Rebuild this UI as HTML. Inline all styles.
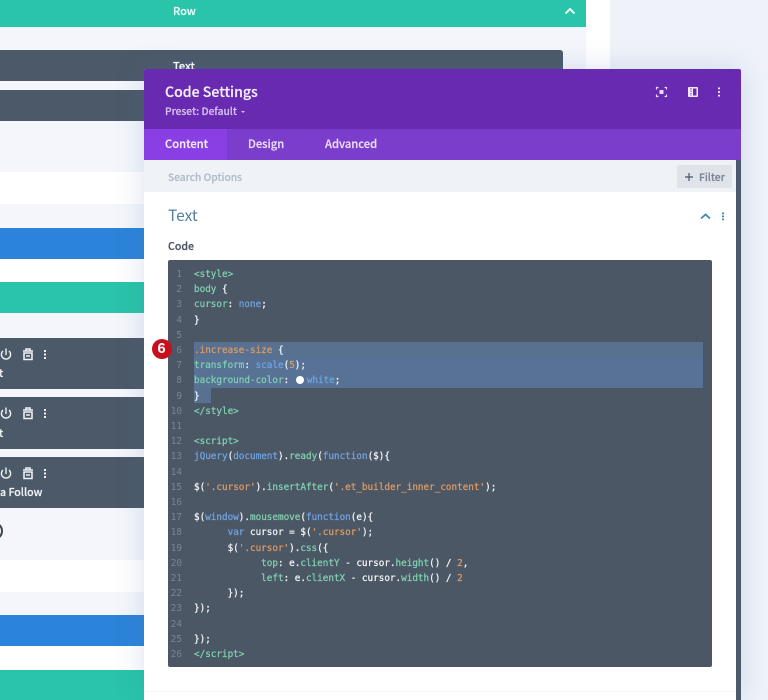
<!DOCTYPE html>
<html><head><meta charset="utf-8">
<style>
html,body{margin:0;padding:0}
body{width:768px;height:700px;overflow:hidden;background:#eff3f9;position:relative}
#w{position:absolute;left:0;top:0;width:768px;height:700px;overflow:hidden;filter:blur(.35px);font-family:"Noto Sans CJK SC","Liberation Sans",sans-serif}
.b{position:absolute}
.t{position:absolute;white-space:pre;line-height:1}
.sb{font-weight:500;-webkit-text-stroke:.2px currentColor}
#code div{position:absolute;left:194px;margin-top:1px;white-space:pre;font:9.3px/15px "DejaVu Sans Mono",monospace;color:#f2f4f6;-webkit-text-stroke:.25px currentColor}
#code i{position:absolute;left:-34px;width:22px;text-align:right;font-style:normal;color:#7a8592;-webkit-text-stroke:0}
.g{color:#7fd0ae}.u{color:#6fa3e0}.o{color:#dd9a62}
</style></head><body><div id="w">
<div class="b" style="left:0;top:0;width:610px;height:700px;background:#fff"></div>
<div class="b" style="left:0;top:0;width:586px;height:700px;background:#f4f6fb"></div>
<div class="b" style="left:0;top:0;width:586px;height:27px;background:#29c4a9"></div>
<div class="t sb" style="left:173px;top:6px;font-size:11px;color:#eafaf6">Row</div>
<svg class="b" style="left:564px;top:6px" width="12" height="10"><path d="M1.500 7.500L6 3L10.500 7.500" fill="none" stroke="#eafaf6" stroke-width="2"/></svg>
<div class="b" style="left:0;top:50px;width:563px;height:31px;background:#4c5968;border-radius:0 3px 0 0"></div>
<div class="t sb" style="left:173px;top:61px;font-size:11px;color:#fff">Text</div>
<div class="b" style="left:0;top:90px;width:563px;height:31px;background:#4c5968"></div>
<div class="b" style="left:0;top:172px;width:586px;height:32px;background:#fff"></div>
<div class="b" style="left:0;top:228px;width:586px;height:31px;background:#2b84d9"></div>
<div class="b" style="left:0;top:259px;width:586px;height:23px;background:#fff"></div>
<div class="b" style="left:0;top:282px;width:586px;height:31px;background:#29c4a9"></div>
<div class="b" style="left:0;top:338px;width:563px;height:51px;background:#4c5968"></div>
<div class="b" style="left:0;top:397px;width:563px;height:52px;background:#4c5968"></div>
<div class="b" style="left:0;top:457px;width:563px;height:51px;background:#4c5968"></div>
<div class="b" style="left:0;top:560px;width:586px;height:32px;background:#fff"></div>
<div class="b" style="left:0;top:615px;width:586px;height:31px;background:#2b84d9"></div>
<div class="b" style="left:0;top:646px;width:586px;height:24px;background:#fff"></div>
<div class="b" style="left:0;top:670px;width:586px;height:30px;background:#29c4a9"></div>

<svg class="b" style="left:0;top:344px" width="60" height="170" fill="none" stroke="#eef1f4" stroke-width="1.400">
<g><path d="M3 7a4.600 4.600 0 1 0 6 0M6 4.500V11"/><path d="M24 9h8v6.500h-8zM23 7h10M26 6.500V5h4v1.500M26 12h4" stroke-width="1.600"/><path d="M45 6v2M45 9.500v2M45 13v2" stroke-width="2"/></g>
<g transform="translate(0,59)"><path d="M3 7a4.600 4.600 0 1 0 6 0M6 4.500V11"/><path d="M24 9h8v6.500h-8zM23 7h10M26 6.500V5h4v1.500M26 12h4" stroke-width="1.600"/><path d="M45 6v2M45 9.500v2M45 13v2" stroke-width="2"/></g>
<g transform="translate(0,119)"><path d="M3 7a4.600 4.600 0 1 0 6 0M6 4.500V11"/><path d="M24 9h8v6.500h-8zM23 7h10M26 6.500V5h4v1.500M26 12h4" stroke-width="1.600"/><path d="M45 6v2M45 9.500v2M45 13v2" stroke-width="2"/></g>
</svg>
<div class="t sb" style="left:-1px;top:369px;font-size:10.600px;color:#eef1f4">t</div>
<div class="t sb" style="left:-1px;top:429px;font-size:10.600px;color:#eef1f4">t</div>
<div class="t sb" style="left:0;top:488px;font-size:10.600px;color:#eef1f4">a Follow</div>
<div class="b" style="left:-10px;top:523px;width:9px;height:12px;border:2px solid #3d4652;border-radius:50%;background:#fff"></div>

<!-- modal -->
<div class="b" style="left:144px;top:69px;width:597px;height:631px;background:#fff;box-shadow:0 0 30px rgba(70,110,170,.2);border-radius:2px 2px 0 0"></div>
<div class="b" style="left:144px;top:69px;width:597px;height:60px;background:#672ab0;border-radius:2px 2px 0 0"></div>
<div class="t sb" style="left:165px;top:85px;font-size:14.100px;color:#f3ecfb">Code Settings</div>
<div class="t sb" style="left:165px;top:106px;font-size:10.200px;color:#d5bff0">Preset: Default</div>
<div class="b" style="left:241px;top:111px;border:2px solid transparent;border-top:2.500px solid #d5bff0;border-bottom:0"></div>
<svg class="b" style="left:650px;top:84px" width="80" height="16">
<path d="M8.500 3.500H6.500v2M14.500 3.500h2v2M8.500 12.500H6.500v-2M14.500 12.500h2v-2" fill="none" stroke="#e9dcfa" stroke-width="1.200"/>
<rect x="9.500" y="6" width="4" height="4" rx=".5" fill="#e9dcfa"/>
<rect x="38" y="3" width="10" height="10" rx="1" fill="#f1e9fb"/>
<path d="M41 4v8" stroke="#672ab0" stroke-width="1" stroke-dasharray="1.500 1"/>
<rect x="43" y="4.500" width="3.500" height="7" fill="#672ab0"/>
<path d="M69 3.500v1.800M69 7.100v1.800M69 10.700v1.800" stroke="#f1e9fb" stroke-width="2"/>
</svg>
<div class="b" style="left:144px;top:129px;width:597px;height:31px;background:#7b3dcb"></div>
<div class="b" style="left:144px;top:129px;width:83px;height:31px;background:#893fe4"></div>
<div class="t sb" style="left:165px;top:139px;font-size:11.200px;color:#f3ecfb">Content</div>
<div class="t sb" style="left:248px;top:139px;font-size:11.200px;color:#eadcf8">Design</div>
<div class="t sb" style="left:325px;top:139px;font-size:11.200px;color:#eadcf8">Advanced</div>
<div class="b" style="left:144px;top:160px;width:592px;height:32px;background:#eff3f8"></div>
<div class="t sb" style="left:168px;top:171.500px;font-size:10.200px;color:#b4bcc8">Search Options</div>
<div class="b" style="left:677px;top:165px;width:55px;height:23px;background:#dfe3ea;border-radius:2px"></div>
<svg class="b" style="left:684px;top:172px" width="10" height="10"><path d="M1 5h8M5 1v8" stroke="#5c6877" stroke-width="1.400"/></svg>
<div class="t sb" style="left:699px;top:171.500px;font-size:10.300px;color:#7b8592">Filter</div>
<div class="b" style="left:736px;top:160px;width:5px;height:540px;background:#4d5a6b"></div>
<div class="t" style="left:168px;top:208px;font-size:15.500px;color:#4f81a3">Text</div>
<svg class="b" style="left:698px;top:208px" width="30" height="16">
<path d="M3 10.500L7.500 6.500L12 10.500" fill="none" stroke="#3f8ab0" stroke-width="1.800"/>
<path d="M25 4.500v1.800M25 7.500v1.800M25 10.500v1.800" stroke="#3f8ab0" stroke-width="2"/>
</svg>
<div class="t sb" style="left:168px;top:242px;font-size:10.600px;color:#4b5563">Code</div>

<!-- editor -->
<div class="b" style="left:168px;top:260px;width:544px;height:407px;background:#4c5766;border-radius:2px"></div>
<div class="b" style="left:194px;top:342px;width:509px;height:15.500px;background:#587190"></div>
<div class="b" style="left:194px;top:357.500px;width:509px;height:30px;background:#577295"></div>
<div class="b" style="left:194px;top:387.500px;width:17px;height:15px;background:#587190"></div>
<div id="code">
<div style="top:266px"><i>1</i><span class="g">&lt;style&gt;</span></div>
<div style="top:281px"><i>2</i><span class="g">body</span> {</div>
<div style="top:296px"><i>3</i><span class="g">cursor</span>: <span class="u">none</span>;</div>
<div style="top:312px"><i>4</i>}</div>
<div style="top:327px"><i>5</i></div>
<div style="top:342px"><i>6</i><span class="o">.increase-size</span> {</div>
<div style="top:357px"><i>7</i><span class="g">transform</span>: <span class="u">scale</span>(<span class="o">5</span>);</div>
<div style="top:372px"><i>8</i><span class="g">background-color</span>: <span style="display:inline-block;width:8px;height:8px;border-radius:50%;background:#fff;margin:0 3px 0 1px;vertical-align:-1px"></span><span class="u">white</span>;</div>
<div style="top:388px"><i>9</i>}</div>
<div style="top:403px"><i>10</i><span class="g">&lt;/style&gt;</span></div>
<div style="top:418px"><i>11</i></div>
<div style="top:433px"><i>12</i><span class="g">&lt;script&gt;</span></div>
<div style="top:448px"><i>13</i><span class="u">jQuery</span>(<span class="u">document</span>).<span class="g">ready</span>(<span class="u">function</span>($){</div>
<div style="top:464px"><i>14</i></div>
<div style="top:479px"><i>15</i>$(<span class="o">'.cursor'</span>).<span class="g">insertAfter</span>(<span class="o">'.et_builder_inner_content'</span>);</div>
<div style="top:494px"><i>16</i></div>
<div style="top:509px"><i>17</i>$(<span class="u">window</span>).<span class="g">mousemove</span>(<span class="u">function</span>(e){</div>
<div style="top:524px"><i>18</i>      <span class="u">var</span> cursor = $(<span class="o">'.cursor'</span>);</div>
<div style="top:540px"><i>19</i>      $(<span class="o">'.cursor'</span>).<span class="g">css</span>({</div>
<div style="top:555px"><i>20</i>            <span class="g">top</span>: e.<span class="g">clientY</span> - cursor.<span class="g">height</span>() / <span class="o">2</span>,</div>
<div style="top:570px"><i>21</i>            <span class="g">left</span>: e.<span class="g">clientX</span> - cursor.<span class="g">width</span>() / <span class="o">2</span></div>
<div style="top:585px"><i>22</i>      });</div>
<div style="top:600px"><i>23</i>});</div>
<div style="top:616px"><i>24</i></div>
<div style="top:631px"><i>25</i>});</div>
<div style="top:646px"><i>26</i><span class="g">&lt;/script&gt;</span></div>
</div>
<div class="b" style="left:144px;top:691px;width:592px;height:1px;background:#f3f5f8"></div>
<div class="b" style="left:152px;top:339px;width:20px;height:20px;border-radius:50%;background:#c8101c"></div>
<div class="t" style="left:157.500px;top:341.500px;font-size:14.500px;font-family:'Liberation Sans',sans-serif;font-weight:bold;color:#fff">6</div>
</div></body></html>
